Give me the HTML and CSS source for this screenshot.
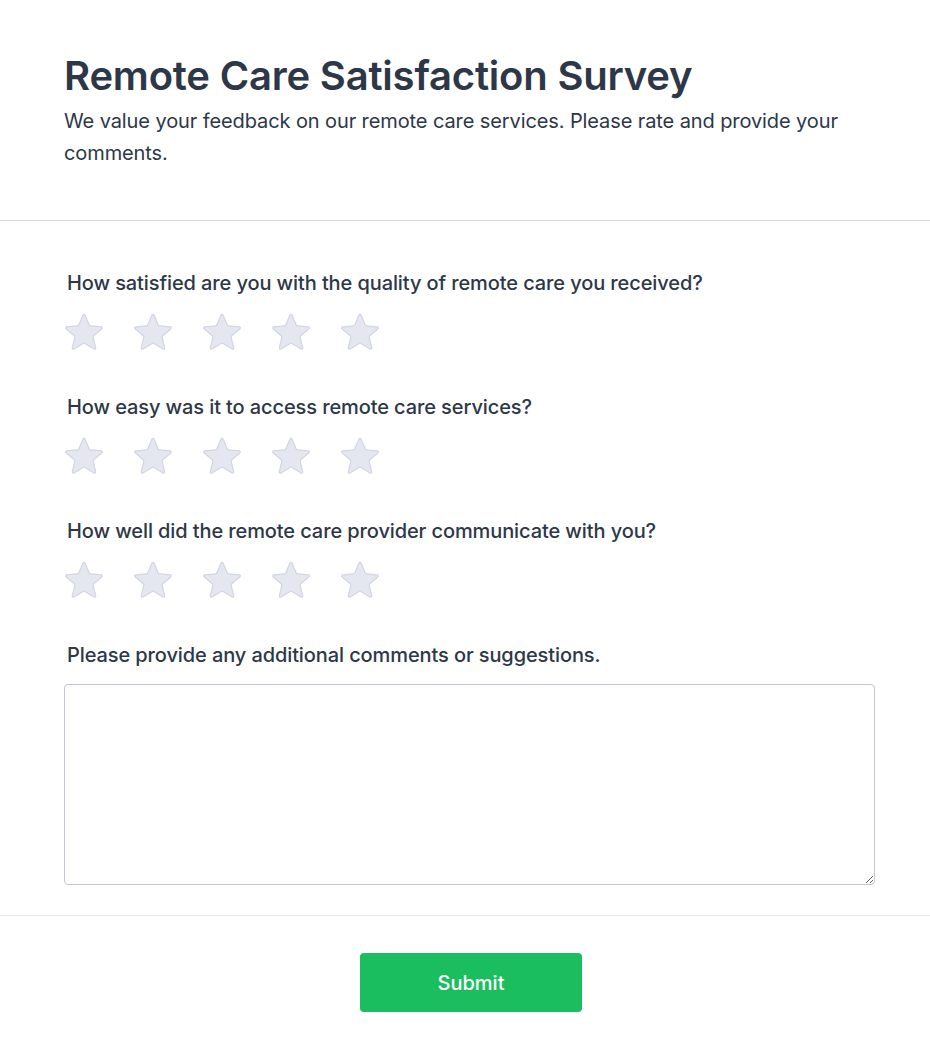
FILE: index.html
```html
<!DOCTYPE html>
<html lang="en">
<head>
<meta charset="utf-8">
<title>Remote Care Satisfaction Survey</title>
<link rel="stylesheet" href="styles.css">
</head>
<body>
<header class="header">
  <h1 class="title">Remote Care Satisfaction Survey</h1>
  <p class="subtitle">We value your feedback on our remote care services. Please rate and provide your comments.</p>
</header>
<form class="form">
  <div class="question">
    <label class="label">How satisfied are you with the quality of remote care you received?</label>
    <div class="stars">
      <svg class="star" viewBox="0 0 24 24"><path d="M11.48 3.499a.562.562 0 011.04 0l2.125 5.111a.563.563 0 00.475.345l5.518.442c.499.04.701.663.321.988l-4.204 3.602a.563.563 0 00-.182.557l1.285 5.385a.562.562 0 01-.84.61l-4.725-2.885a.563.563 0 00-.586 0L6.982 20.54a.562.562 0 01-.84-.61l1.285-5.386a.562.562 0 00-.182-.557l-4.204-3.602a.563.563 0 01.321-.988l5.518-.442a.563.563 0 00.475-.345L11.48 3.5z"/></svg>
      <svg class="star" viewBox="0 0 24 24"><path d="M11.48 3.499a.562.562 0 011.04 0l2.125 5.111a.563.563 0 00.475.345l5.518.442c.499.04.701.663.321.988l-4.204 3.602a.563.563 0 00-.182.557l1.285 5.385a.562.562 0 01-.84.61l-4.725-2.885a.563.563 0 00-.586 0L6.982 20.54a.562.562 0 01-.84-.61l1.285-5.386a.562.562 0 00-.182-.557l-4.204-3.602a.563.563 0 01.321-.988l5.518-.442a.563.563 0 00.475-.345L11.48 3.5z"/></svg>
      <svg class="star" viewBox="0 0 24 24"><path d="M11.48 3.499a.562.562 0 011.04 0l2.125 5.111a.563.563 0 00.475.345l5.518.442c.499.04.701.663.321.988l-4.204 3.602a.563.563 0 00-.182.557l1.285 5.385a.562.562 0 01-.84.61l-4.725-2.885a.563.563 0 00-.586 0L6.982 20.54a.562.562 0 01-.84-.61l1.285-5.386a.562.562 0 00-.182-.557l-4.204-3.602a.563.563 0 01.321-.988l5.518-.442a.563.563 0 00.475-.345L11.48 3.5z"/></svg>
      <svg class="star" viewBox="0 0 24 24"><path d="M11.48 3.499a.562.562 0 011.04 0l2.125 5.111a.563.563 0 00.475.345l5.518.442c.499.04.701.663.321.988l-4.204 3.602a.563.563 0 00-.182.557l1.285 5.385a.562.562 0 01-.84.61l-4.725-2.885a.563.563 0 00-.586 0L6.982 20.54a.562.562 0 01-.84-.61l1.285-5.386a.562.562 0 00-.182-.557l-4.204-3.602a.563.563 0 01.321-.988l5.518-.442a.563.563 0 00.475-.345L11.48 3.5z"/></svg>
      <svg class="star" viewBox="0 0 24 24"><path d="M11.48 3.499a.562.562 0 011.04 0l2.125 5.111a.563.563 0 00.475.345l5.518.442c.499.04.701.663.321.988l-4.204 3.602a.563.563 0 00-.182.557l1.285 5.385a.562.562 0 01-.84.61l-4.725-2.885a.563.563 0 00-.586 0L6.982 20.54a.562.562 0 01-.84-.61l1.285-5.386a.562.562 0 00-.182-.557l-4.204-3.602a.563.563 0 01.321-.988l5.518-.442a.563.563 0 00.475-.345L11.48 3.5z"/></svg>
    </div>
  </div>
  <div class="question">
    <label class="label">How easy was it to access remote care services?</label>
    <div class="stars">
      <svg class="star" viewBox="0 0 24 24"><path d="M11.48 3.499a.562.562 0 011.04 0l2.125 5.111a.563.563 0 00.475.345l5.518.442c.499.04.701.663.321.988l-4.204 3.602a.563.563 0 00-.182.557l1.285 5.385a.562.562 0 01-.84.61l-4.725-2.885a.563.563 0 00-.586 0L6.982 20.54a.562.562 0 01-.84-.61l1.285-5.386a.562.562 0 00-.182-.557l-4.204-3.602a.563.563 0 01.321-.988l5.518-.442a.563.563 0 00.475-.345L11.48 3.5z"/></svg>
      <svg class="star" viewBox="0 0 24 24"><path d="M11.48 3.499a.562.562 0 011.04 0l2.125 5.111a.563.563 0 00.475.345l5.518.442c.499.04.701.663.321.988l-4.204 3.602a.563.563 0 00-.182.557l1.285 5.385a.562.562 0 01-.84.61l-4.725-2.885a.563.563 0 00-.586 0L6.982 20.54a.562.562 0 01-.84-.61l1.285-5.386a.562.562 0 00-.182-.557l-4.204-3.602a.563.563 0 01.321-.988l5.518-.442a.563.563 0 00.475-.345L11.48 3.5z"/></svg>
      <svg class="star" viewBox="0 0 24 24"><path d="M11.48 3.499a.562.562 0 011.04 0l2.125 5.111a.563.563 0 00.475.345l5.518.442c.499.04.701.663.321.988l-4.204 3.602a.563.563 0 00-.182.557l1.285 5.385a.562.562 0 01-.84.61l-4.725-2.885a.563.563 0 00-.586 0L6.982 20.54a.562.562 0 01-.84-.61l1.285-5.386a.562.562 0 00-.182-.557l-4.204-3.602a.563.563 0 01.321-.988l5.518-.442a.563.563 0 00.475-.345L11.48 3.5z"/></svg>
      <svg class="star" viewBox="0 0 24 24"><path d="M11.48 3.499a.562.562 0 011.04 0l2.125 5.111a.563.563 0 00.475.345l5.518.442c.499.04.701.663.321.988l-4.204 3.602a.563.563 0 00-.182.557l1.285 5.385a.562.562 0 01-.84.61l-4.725-2.885a.563.563 0 00-.586 0L6.982 20.54a.562.562 0 01-.84-.61l1.285-5.386a.562.562 0 00-.182-.557l-4.204-3.602a.563.563 0 01.321-.988l5.518-.442a.563.563 0 00.475-.345L11.48 3.5z"/></svg>
      <svg class="star" viewBox="0 0 24 24"><path d="M11.48 3.499a.562.562 0 011.04 0l2.125 5.111a.563.563 0 00.475.345l5.518.442c.499.04.701.663.321.988l-4.204 3.602a.563.563 0 00-.182.557l1.285 5.385a.562.562 0 01-.84.61l-4.725-2.885a.563.563 0 00-.586 0L6.982 20.54a.562.562 0 01-.84-.61l1.285-5.386a.562.562 0 00-.182-.557l-4.204-3.602a.563.563 0 01.321-.988l5.518-.442a.563.563 0 00.475-.345L11.48 3.5z"/></svg>
    </div>
  </div>
  <div class="question">
    <label class="label">How well did the remote care provider communicate with you?</label>
    <div class="stars">
      <svg class="star" viewBox="0 0 24 24"><path d="M11.48 3.499a.562.562 0 011.04 0l2.125 5.111a.563.563 0 00.475.345l5.518.442c.499.04.701.663.321.988l-4.204 3.602a.563.563 0 00-.182.557l1.285 5.385a.562.562 0 01-.84.61l-4.725-2.885a.563.563 0 00-.586 0L6.982 20.54a.562.562 0 01-.84-.61l1.285-5.386a.562.562 0 00-.182-.557l-4.204-3.602a.563.563 0 01.321-.988l5.518-.442a.563.563 0 00.475-.345L11.48 3.5z"/></svg>
      <svg class="star" viewBox="0 0 24 24"><path d="M11.48 3.499a.562.562 0 011.04 0l2.125 5.111a.563.563 0 00.475.345l5.518.442c.499.04.701.663.321.988l-4.204 3.602a.563.563 0 00-.182.557l1.285 5.385a.562.562 0 01-.84.61l-4.725-2.885a.563.563 0 00-.586 0L6.982 20.54a.562.562 0 01-.84-.61l1.285-5.386a.562.562 0 00-.182-.557l-4.204-3.602a.563.563 0 01.321-.988l5.518-.442a.563.563 0 00.475-.345L11.48 3.5z"/></svg>
      <svg class="star" viewBox="0 0 24 24"><path d="M11.48 3.499a.562.562 0 011.04 0l2.125 5.111a.563.563 0 00.475.345l5.518.442c.499.04.701.663.321.988l-4.204 3.602a.563.563 0 00-.182.557l1.285 5.385a.562.562 0 01-.84.61l-4.725-2.885a.563.563 0 00-.586 0L6.982 20.54a.562.562 0 01-.84-.61l1.285-5.386a.562.562 0 00-.182-.557l-4.204-3.602a.563.563 0 01.321-.988l5.518-.442a.563.563 0 00.475-.345L11.48 3.5z"/></svg>
      <svg class="star" viewBox="0 0 24 24"><path d="M11.48 3.499a.562.562 0 011.04 0l2.125 5.111a.563.563 0 00.475.345l5.518.442c.499.04.701.663.321.988l-4.204 3.602a.563.563 0 00-.182.557l1.285 5.385a.562.562 0 01-.84.61l-4.725-2.885a.563.563 0 00-.586 0L6.982 20.54a.562.562 0 01-.84-.61l1.285-5.386a.562.562 0 00-.182-.557l-4.204-3.602a.563.563 0 01.321-.988l5.518-.442a.563.563 0 00.475-.345L11.48 3.5z"/></svg>
      <svg class="star" viewBox="0 0 24 24"><path d="M11.48 3.499a.562.562 0 011.04 0l2.125 5.111a.563.563 0 00.475.345l5.518.442c.499.04.701.663.321.988l-4.204 3.602a.563.563 0 00-.182.557l1.285 5.385a.562.562 0 01-.84.61l-4.725-2.885a.563.563 0 00-.586 0L6.982 20.54a.562.562 0 01-.84-.61l1.285-5.386a.562.562 0 00-.182-.557l-4.204-3.602a.563.563 0 01.321-.988l5.518-.442a.563.563 0 00.475-.345L11.48 3.5z"/></svg>
    </div>
  </div>
  <div class="question comments">
    <label class="label" for="comments">Please provide any additional comments or suggestions.</label>
    <textarea id="comments" class="textarea"></textarea>
  </div>
</form>
<footer class="footer">
  <button type="button" class="submit">Submit</button>
</footer>
</body>
</html>
```

FILE: styles.css
```css
* { box-sizing: border-box; }
body {
  margin: 0;
  background: #ffffff;
  font-family: Inter, "Noto Sans", sans-serif;
  color: #2d3748;
}
.header {
  padding: 56px 55px 51px 64px;
  border-bottom: 1px solid #d5d8e4;
}
.title {
  margin: 0 0 9px;
  font-size: 40px;
  line-height: 40px;
  font-weight: 600;
  letter-spacing: -0.005em;
  color: #2d3748;
}
.subtitle {
  margin: 0;
  font-size: 20px;
  line-height: 32px;
  letter-spacing: -0.005em;
  color: #2d3748;
}
.form {
  padding: 50px 55px 30px 64px;
  display: flex;
  flex-direction: column;
  gap: 39px;
  border-bottom: 1px solid #e5e7eb;
}
.question {
  display: flex;
  flex-direction: column;
  gap: 13px;
}
.comments { gap: 17px; }
.label {
  margin-left: 3px;
  font-size: 20px;
  line-height: 24px;
  font-weight: 500;
  letter-spacing: -0.005em;
  color: #2d3748;
}
.stars {
  display: flex;
  gap: 21px;
  margin-left: -4px;
}
.star {
  width: 48px;
  height: 48px;
  fill: #e5e7f0;
  stroke: #d3d6e2;
  stroke-width: 0.6;
  stroke-linejoin: round;
}
.textarea {
  display: block;
  width: 100%;
  height: 201px;
  border: 1px solid #c3c6d4;
  border-radius: 4px;
  font-family: inherit;
  font-size: 16px;
  padding: 8px 12px;
}
.footer {
  padding: 37px 54px 49px 66px;
  display: flex;
  justify-content: center;
}
.submit {
  width: 222px;
  height: 59px;
  border: none;
  border-radius: 4px;
  background: #1bbe5e;
  color: #ffffff;
  font-family: inherit;
  font-size: 20px;
  font-weight: 500;
}
```
